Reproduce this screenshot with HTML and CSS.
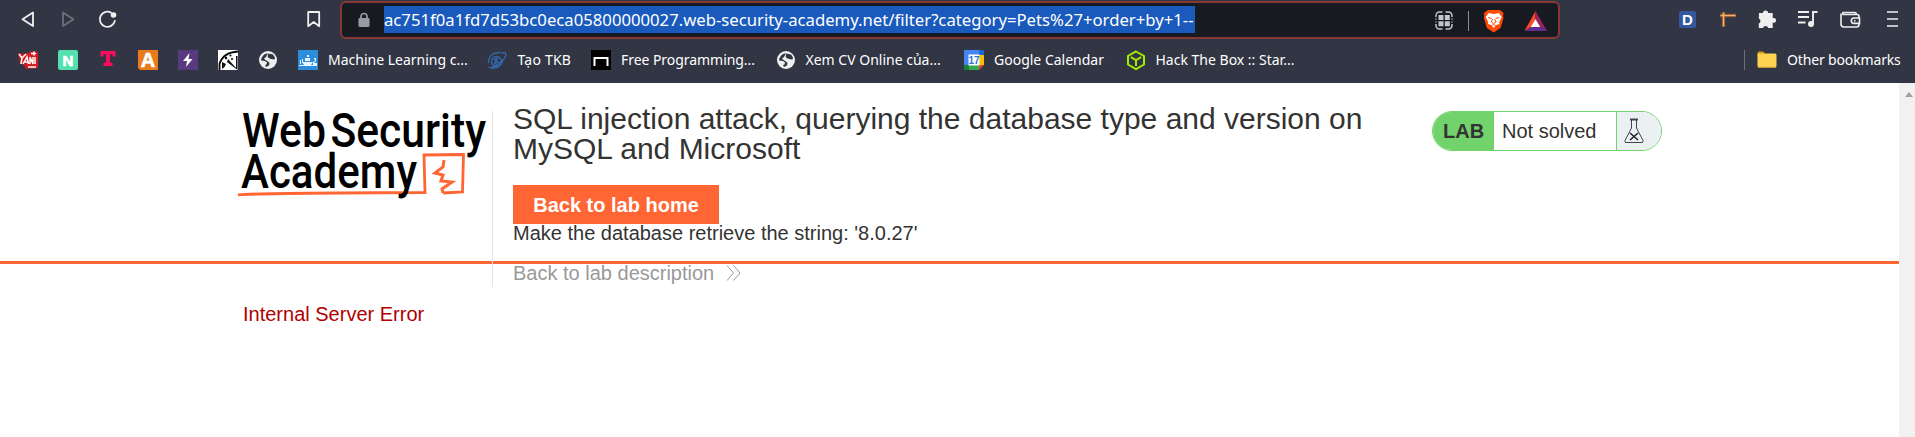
FILE: index.html
```
<!DOCTYPE html>
<html lang="en">
<head>
<meta charset="utf-8">
<title>SQL injection attack</title>
<link rel="stylesheet" href="styles.css">
</head>
<body>
<div class="browser">
  <div class="toolbar">
    <svg class="nav" width="330" height="40" fill="none" stroke="#f0f0f0" stroke-width="1.8" stroke-linejoin="round">
      <path d="M33 12.5v13.5L22.5 19.2z"/>
      <path d="M63 12.5v13.5L73.500 19.2z" stroke="#6d6f7b"/>
      <path d="M111 12.600A7.600 7.600 0 1 0 114.800 21" stroke-linecap="round"/>
      <circle cx="113.500" cy="15" r="2.800" fill="#f0f0f0" stroke="none"/>
      <path d="M308.200 12h11v14.200l-5.500-4.200-5.500 4.200z"/>
    </svg>
    <div class="address">
      <svg class="lock" width="12" height="16"><path d="M3 7V4.500a3 3 0 0 1 6 0V7" fill="none" stroke="#989ba3" stroke-width="1.700"/><rect x=".5" y="6" width="11" height="9" rx="1.300" fill="#989ba3"/></svg>
      <span class="url">ac751f0a1fd7d53bc0eca05800000027.web-security-academy.net/filter?category=Pets%27+order+by+1--</span>
      <svg class="addr-icons" width="118" height="32">
        <g fill="none" stroke="#c4c5c8" stroke-width="1.500"><path d="M2 11V9.500A3.500 3.500 0 0 1 5.500 6H8.500M11.500 6h3A3.500 3.500 0 0 1 18 9.500V11M18 18v1.500a3.500 3.500 0 0 1-3.500 3.500H11.500M8.500 23H5.500A3.500 3.500 0 0 1 2 19.500V18M2 12.500v1M18 12.500v1M2 15.500v1M18 15.500v1"/></g>
        <path d="M4.500 9h5v5h-5zM10.800 9h5v5h-5zM4.500 15.200h5v5h-5zM10.800 15.200h5v5h-5z" fill="#c4c5c8"/>
        <path d="M34.500 5v20" stroke="#8b8d92"/>
        <path d="M54 4h12l3.500 3-.5 3 .5 2-3 10-6.800 4.500-6.800-4.500-3-10 .5-2-.5-3z" fill="#ff4a08"/>
        <path d="M54.700 7l5 1 5-1 3 4-2.500 5 .2 2-3.200 1-2.500 3-2.500-3-3.200-1 .2-2-2.500-5z" fill="#fff"/>
        <path d="M54.200 11.500l3.500 1M65.200 11.500l-3.500 1M58.700 13l-1.500 3 2.500 1.500 2.500-1.500-1.500-3M57.700 19.500l2-1 2 1" fill="none" stroke="#ff4a08" stroke-width="1"/>
        <path d="M101.500 5v8l-4.500 8L90.500 25z" fill="#ff4724"/><path d="M101.500 5L113 25l-6.500-4-5-8z" fill="#9e1f63"/><path d="M90.500 25l6.500-4h9.500l6.500 4z" fill="#662d91"/><path d="M101.500 13l4.800 8h-9.600z" fill="#fff"/>
      </svg>
    </div>
    <svg class="extensions" width="350" height="40">
      <rect x="114" y="11" width="17" height="17" rx="2" fill="#35579e"/><text x="117" y="25" class="d-mark">D</text>
      <path d="M155 15.500h16M158.500 12v15" stroke="#8d4c1e" stroke-width="3.400"/><path d="M155.500 15.500h15M158.500 12.500v14" stroke="#efb27c" stroke-width="1.500"/>
      <path d="M194 13h4a2.600 2.600 0 1 1 5.200 0h4.500v5h1a2.300 2.300 0 0 1 0 4.800h-1V28h-4.500a2.700 2.700 0 0 0-5.200 0h-4.200v-4.500a2.700 2.700 0 0 0 0-5z" fill="#efefef"/>
      <path d="M233 12h11M233 17h11M233 22.500h7.500M248 24V12h4.500" fill="none" stroke="#efefef" stroke-width="1.900"/><circle cx="246" cy="24" r="3" fill="#efefef"/>
      <g fill="none" stroke="#efefef" stroke-width="1.600"><path d="M294 18v-1.500a2 2 0 0 0-2-2H278a2 2 0 0 1 0-2h11.500a2 2 0 0 1 2 2M276 13.500v10.500a3 3 0 0 0 3 3h12.500a2.500 2.500 0 0 0 2.500-2.500v-1M294.500 18H289a2.700 2.700 0 0 0 0 5.400h5.500zM289 20.700h1.500"/></g>
      <path d="M322 12h11M322 19h11M322 26h11" stroke="#efefef" stroke-width="1.700"/>
    </svg>
  </div>
  <div class="bookmarks">
    <svg class="fav" viewBox="0 0 20 20"><path d="M0 3l7 1 5-2 3-1 5 1v16l-12 1-2-4-4-2z" fill="#d71920"/><path d="M1 4l3 4 4-4M4 8l-1 6M5 14l4-7 1.500 7M6.500 12h4M12 14V7l3 7V7M17 7v7M10 17h8M13 3.500h5M16 1.500v4" fill="none" stroke="#fff" stroke-width="1.500"/></svg>
    <svg class="fav" viewBox="0 0 20 20"><rect width="20" height="20" rx="2" fill="#54e0ae"/><text x="10" y="15.500" class="letter heavy">N</text></svg>
    <svg class="fav" viewBox="0 0 20 20"><path d="M2.500 1h15v5.500h-3V4.300H12v8.500h2.500V16h-9v-3.200H8V4.300H5.500v2.200h-3z" fill="#fb0d5c"/></svg>
    <svg class="fav" viewBox="0 0 20 20"><path d="M0 0h20v20H2l-2-2z" fill="#e97b1a"/><text x="10" y="17" class="letter heavy large">A</text></svg>
    <svg class="fav" viewBox="0 0 20 20"><rect width="20" height="20" fill="#573b7e"/><path d="M11.500 3L5 11h4l-1 6 6.500-8h-4z" fill="#fff"/></svg>
    <svg class="fav" viewBox="0 0 20 20"><path d="M0 0h20v20H0z" fill="#fff"/><path d="M1.500 20V14Q5 2.500 20 1.500" fill="none" stroke="#080808" stroke-width="1.800"/><path d="M4 12l4 2-1.500 3L4 19zM10 9l8 9V6h1.500v14L9 12z" fill="#111"/><circle cx="8" cy="8" r="1.200"/><circle cx="12.500" cy="5.500" r="1"/><circle cx="14" cy="9" r="1"/></svg>
    <svg class="fav" viewBox="0 0 20 20"><use href="#globe"/></svg>
    <svg class="fav" viewBox="0 0 20 20"><path d="M0 0h20v20H0z" fill="#2c8ddd"/><path d="M1 15h18v1H1zM4 12h11l-2 3H6zM7 8h5v3H7zM16 8h2v3l-2 2h3v2h-4v-3l2-1zM2 10v4M9 5h2v2H9zM2 10h1v4H2zM4 9h1v3H4z" fill="#e7f3ff"/></svg>
    <span class="label w139">Machine Learning c...</span>
    <svg class="fav" viewBox="0 0 20 20"><g fill="none" stroke="#356ab0" stroke-width="1.300"><circle cx="8.500" cy="11.500" r="5"/><path d="M.5 13Q0 3 12 2.500M13 3q5-1 5 1 0 5-8 10T1 17M3 18q9 1 12-8M6 9l5 4M10 8l-4 6M8 8v7"/></g></svg>
    <span class="label w53">Tạo TKB</span>
    <svg class="fav" viewBox="0 0 20 20"><path d="M0 0h20v20H0z"/><path d="M3.500 16V8h13v8" fill="none" stroke="#fff" stroke-width="2"/></svg>
    <span class="label w134">Free Programming...</span>
    <svg class="fav" viewBox="0 0 20 20"><g id="globe"><circle cx="10" cy="10" r="9" fill="#efefef"/><path d="M10 3L6 4.500 3.500 8 3 10.500l4 .5 2 1.500-.5 2L7 15l1 2 3-1.500.500-2.500-1.500-1.500L7.500 10 6 8.500l2-1.500zM10.500 3.500L9.500 6l1 2 2.500 1 3.500.5.500-2-2-3z" fill="#323543"/></g></svg>
    <span class="label w138">Xem CV Online của...</span>
    <svg class="fav" viewBox="0 0 20 20"><path d="M0 1q0-1 1-1h14v5H5v10H0z" fill="#4285f4"/><path d="M15 0h4q1 0 1 1v4h-5z" fill="#1967d2"/><path d="M15 5h5v10h-5z" fill="#fbbc04"/><path d="M0 15h5v5H1q-1 0-1-1z" fill="#188038"/><path d="M5 15h10v5H5z" fill="#34a853"/><path d="M15 15h5l-5 5z" fill="#ea4335"/><path d="M4.500 4.500h11v11h-11z" fill="#fff"/><text x="10" y="14" class="date">17</text></svg>
    <span class="label w111">Google Calendar</span>
    <svg class="fav" viewBox="0 0 20 20"><path d="M10 1.500l8 4.500v8.500l-8 4.500-8-4.500V6zM4.800 7.200L10 10.200l5.200-3M10 10v6" fill="none" stroke="#9fef00" stroke-width="2"/></svg>
    <span class="label w139">Hack The Box :: Star...</span>
    <div class="other">
      <svg class="fav" viewBox="0 0 20 20"><path d="M.5 3q0-1.500 1.500-1.500h4L8 3.500v3H.5z" fill="#d99a13"/><rect x=".5" y="3.500" width="19" height="14" rx="1.500" fill="#ffd452"/><path d="M1 17h18" stroke="#eeb932"/></svg>
      <span class="label w114">Other bookmarks</span>
    </div>
  </div>
</div>
<div class="viewport">
  <main class="page">
    <header class="lab-header">
      <svg class="logo" width="256" height="100">
        <g class="logo-text">
          <text x="4" y="41" textLength="84" lengthAdjust="spacingAndGlyphs">Web</text>
          <text x="92.500" y="41" textLength="155.500" lengthAdjust="spacingAndGlyphs">Security</text>
          <path d="M0 88.800Q20 87 187 86.500L186 49 225.500 48.500 224.500 86 205 87" fill="none" stroke="#ff6633" stroke-width="2.800"/>
          <path d="M206 54l-1 7-8 6 8 2-2 6 11 1-10 7 1 4" fill="none" stroke="#ff6633" stroke-width="3"/>
          <text x="3" y="82" textLength="176" lengthAdjust="spacingAndGlyphs">Academy</text>
        </g>
      </svg>
      <section class="details">
        <h1>SQL injection attack, querying the database type and version on<br>MySQL and Microsoft</h1>
        <a class="button">Back to lab home</a>
        <p class="hint">Make the database retrieve the string: '8.0.27'</p>
        <a class="back">Back to lab description <svg width="16" height="16" fill="none" stroke="#999"><path d="M1 .5l6.500 7.500L1 15.500M7.500 .5L14 8l-6.500 7.500"/></svg></a>
      </section>
      <div class="status">
        <b>LAB</b><span>Not solved</span>
        <i><svg width="20" height="26" fill="none" stroke="#444"><path d="M6 1.500h8" stroke-width="2"/><path d="M7.500 2v8L1 22.500q-.5 2 1 2h16q1.500 0 1-2L12.500 10V2" stroke-width="1"/><path d="M6 15l8 7M14 15l-8 7" stroke="#222" stroke-width="1.600"/></svg></i>
      </div>
    </header>
    <p class="error">Internal Server Error</p>
  </main>
  <div class="scrollbar"></div>
</div>
</body>
</html>
```

FILE: styles.css
```
* { box-sizing: border-box; }
body { margin: 0; height: 437px; overflow: hidden; background: #fff; font: 20px/24px "Liberation Sans", Arial, sans-serif; color: #333332; }
svg { display: block; flex: none; overflow: visible; }
h1, p { margin: 0; font-weight: 400; }
.browser { height: 83px; background: #323543; color: #fff; font-family: "Noto Sans", sans-serif; }
.toolbar { display: flex; height: 40px; }
.address { display: flex; align-items: flex-start; width: 1220px; height: 38px; margin: 1px 0 0 10px; padding: 3px 0 0 16px; border: 2px solid #843a31; border-radius: 6px; background: #171a21; }
.lock { margin-top: 6px; }
.url { width: 811px; height: 27px; margin-left: 14px; background: #195abc; font-size: 16.7px; line-height: 27px; white-space: nowrap; }
.addr-icons { margin-left: 239px; }
.extensions { margin-left: 5px; }
.d-mark { font: bold 15px "Liberation Sans", sans-serif; fill: #fff; }
.bookmarks { display: flex; align-items: center; height: 40px; padding-left: 18px; }
.fav { width: 20px; height: 20px; margin-right: 20px; }
.fav:has(+ .label) { margin-right: 10px; }
.label { flex: none; height: 20px; margin-right: 20.5px; font-size: 14px; line-height: 19px; white-space: nowrap; }
.w139 { width: 139px; }
.w53 { width: 53px; letter-spacing: .2px; }
.w134 { width: 134px; letter-spacing: -.05px; }
.w138 { width: 138px; }
.w111 { width: 111px; }
.w114 { width: 114px; margin-right: 0; letter-spacing: -.15px; }
.letter { font: bold 15px "Liberation Sans", sans-serif; fill: #fff; text-anchor: middle; }
.heavy { stroke: #fff; stroke-width: .7px; }
.large { font-size: 20px; }
.date { font: bold 10px "Liberation Sans", sans-serif; fill: #2874e0; text-anchor: middle; }
.other { display: flex; align-items: center; height: 20px; margin: 0 14px 0 auto; padding-left: 12px; border-left: 1px solid #6c6e79; }
.viewport { display: flex; height: 354px; }
.page { flex: 1; }
.lab-header { display: flex; height: 181px; padding: 23px 0 0 238px; border-bottom: 3px solid #ff6633; }
.logo-text { font: 500 48px Roboto, sans-serif; fill: #000; }
.logo { margin-right: -2px; }
.details { flex: none; width: 919px; height: 181px; padding-left: 21px; position: relative; }
.details::before { content: ""; position: absolute; left: 0; top: 5px; width: 1px; height: 176px; background: #e4e4e4; }
h1 { margin-top: -2px; font-size: 30px; line-height: 30px; white-space: nowrap; }
.button { display: block; width: 206px; height: 39px; margin-top: 21px; background: #ff6633; color: #fff; font-weight: 700; line-height: 40px; text-align: center; }
.hint { line-height: 18px; }
.back { display: flex; align-items: center; gap: 12px; margin-top: 19px; color: #999; line-height: 24px; }
.status { display: flex; width: 230px; height: 40px; margin: 5px 0 0 21px; border: 1px solid #72d26c; border-radius: 20px; overflow: hidden; line-height: 38px; }
.status b { width: 61px; padding-left: 10px; background: #72d26c; }
.status span { flex: 1; padding-left: 8px; }
.status i { display: flex; align-items: center; width: 45px; padding-left: 7px; border-left: 1px solid #72d26c; background: #ebf0f3; }
.error { margin: 38px 0 0 243px; color: #b00000; }
.scrollbar { width: 16px; padding: 9px 0 0 6px; background: #f1f1f1; }
.scrollbar::before { content: ""; display: block; width: 0; border: solid transparent; border-width: 0 4.5px 5px; border-bottom-color: #a0a0a0; }
```
